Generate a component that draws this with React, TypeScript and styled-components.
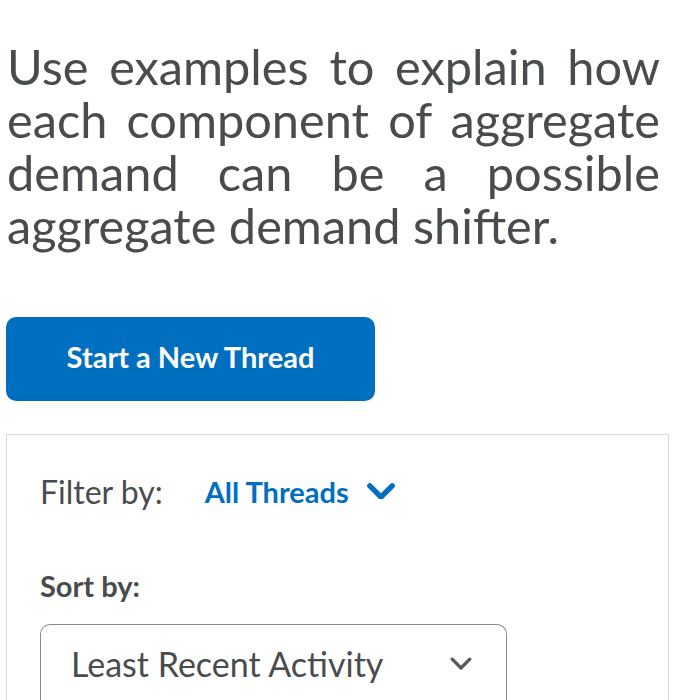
import React from "react";
import styled, { createGlobalStyle } from "styled-components";

const Global = createGlobalStyle`
  html, body { margin: 0; padding: 0; background: #ffffff; }
  body { font-family: Lato, "Open Sans", sans-serif; color: #494c4e; }
`;

const Page = styled.div`
  padding: 40px 40px 0 7px;
  width: 700px;
  box-sizing: border-box;
  overflow: hidden;
  height: 700px;
`;

const Question = styled.h1`
  margin: 0;
  font-weight: 400;
  font-size: 48.7px;
  line-height: 53px;
  text-align: justify;
  color: #494c4e;
  width: 653px;
`;

const PrimaryButton = styled.button`
  margin: 65px 0 0 -1px;
  width: 369px;
  height: 84px;
  padding: 0 0 6px;
  border: none;
  border-radius: 10px;
  background: #006fbf;
  color: #ffffff;
  font-family: Lato, sans-serif;
  font-weight: 700;
  font-size: 29px;
  display: flex;
  align-items: center;
  justify-content: center;
`;

const Panel = styled.div`
  margin: 33px 0 0 -1px;
  width: 663px;
  box-sizing: border-box;
  border: 1px solid #d3d9e3;
  border-bottom: none;
  padding: 36px 0 0 33px;
  height: 300px;
`;

const FilterRow = styled.div`
  display: flex;
  align-items: center;
  height: 40px;
`;

const FilterLabel = styled.span`
  font-size: 32px;
  color: #494c4e;
  margin-right: 42px;
`;

const FilterLink = styled.span`
  display: inline-flex;
  align-items: center;
  gap: 18px;
  font-size: 29px;
  font-weight: 700;
  color: #006fbf;
`;

const SortLabel = styled.div`
  margin-top: 57px;
  font-size: 29px;
  font-weight: 700;
  color: #494c4e;
  line-height: 36px;
`;

const Select = styled.div`
  margin-top: 20px;
  width: 467px;
  height: 90px;
  box-sizing: border-box;
  border: 1.5px solid #868c8f;
  border-bottom: none;
  border-radius: 10px 10px 0 0;
  padding: 0 34px 0 30px;
`;

const SelectRow = styled.div`
  height: 77px;
  display: flex;
  align-items: center;
  justify-content: space-between;
  font-size: 34px;
  color: #494c4e;
`;

const Chevron = ({ color, w, sw }: { color: string; w: number; sw: number }) => (
  <svg width={w} height={w * 0.6} viewBox="0 0 20 12" fill="none">
    <path d="M2 2 L10 10 L18 2" stroke={color} strokeWidth={sw} strokeLinecap="round" strokeLinejoin="round" />
  </svg>
);

export default function App() {
  return (
    <>
      <Global />
      <Page>
        <Question>
          Use examples to explain how each component of aggregate demand can be a possible aggregate demand shifter.
        </Question>
        <PrimaryButton>Start a New Thread</PrimaryButton>
        <Panel>
          <FilterRow>
            <FilterLabel>Filter by:</FilterLabel>
            <FilterLink>
              All Threads
              <Chevron color="#006fbf" w={28} sw={3.8} />
            </FilterLink>
          </FilterRow>
          <SortLabel>Sort by:</SortLabel>
          <Select>
            <SelectRow>
              <span>Least Recent Activity</span>
              <Chevron color="#565a5c" w={22} sw={3} />
            </SelectRow>
          </Select>
        </Panel>
      </Page>
    </>
  );
}
